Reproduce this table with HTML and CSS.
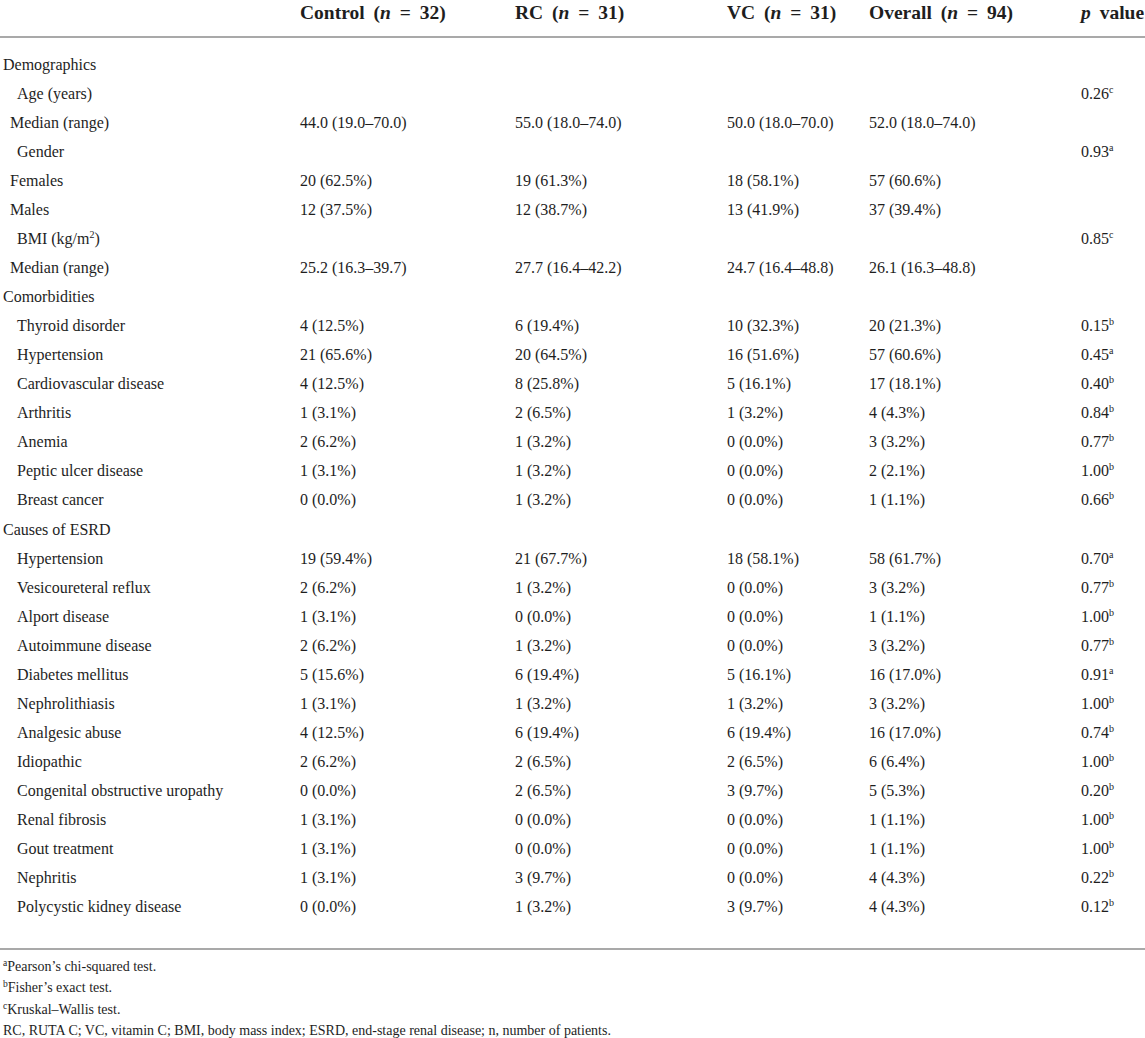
FILE: index.html
```html
<!DOCTYPE html>
<html>
<head>
<meta charset="utf-8">
<link rel="stylesheet" href="styles.css">
</head>
<body>
<div class="tbl">
  <div class="row head">
    <div class="c"></div>
    <div class="c">Control (<i>n</i> = 32)</div>
    <div class="c">RC (<i>n</i> = 31)</div>
    <div class="c">VC (<i>n</i> = 31)</div>
    <div class="c">Overall (<i>n</i> = 94)</div>
    <div class="c"><i>p</i> value</div>
  </div>
  <div class="body">
    <div class="row"><div class="c l0">Demographics</div><div class="c"></div><div class="c"></div><div class="c"></div><div class="c"></div><div class="c"></div></div>
    <div class="row"><div class="c l2">Age (years)</div><div class="c"></div><div class="c"></div><div class="c"></div><div class="c"></div><div class="c">0.26<sup>c</sup></div></div>
    <div class="row"><div class="c l1">Median (range)</div><div class="c">44.0 (19.0–70.0)</div><div class="c">55.0 (18.0–74.0)</div><div class="c">50.0 (18.0–70.0)</div><div class="c">52.0 (18.0–74.0)</div><div class="c"></div></div>
    <div class="row"><div class="c l2">Gender</div><div class="c"></div><div class="c"></div><div class="c"></div><div class="c"></div><div class="c">0.93<sup>a</sup></div></div>
    <div class="row"><div class="c l1">Females</div><div class="c">20 (62.5%)</div><div class="c">19 (61.3%)</div><div class="c">18 (58.1%)</div><div class="c">57 (60.6%)</div><div class="c"></div></div>
    <div class="row"><div class="c l1">Males</div><div class="c">12 (37.5%)</div><div class="c">12 (38.7%)</div><div class="c">13 (41.9%)</div><div class="c">37 (39.4%)</div><div class="c"></div></div>
    <div class="row"><div class="c l2">BMI (kg/m<sup>2</sup>)</div><div class="c"></div><div class="c"></div><div class="c"></div><div class="c"></div><div class="c">0.85<sup>c</sup></div></div>
    <div class="row"><div class="c l1">Median (range)</div><div class="c">25.2 (16.3–39.7)</div><div class="c">27.7 (16.4–42.2)</div><div class="c">24.7 (16.4–48.8)</div><div class="c">26.1 (16.3–48.8)</div><div class="c"></div></div>
    <div class="row"><div class="c l0">Comorbidities</div><div class="c"></div><div class="c"></div><div class="c"></div><div class="c"></div><div class="c"></div></div>
    <div class="row"><div class="c l2">Thyroid disorder</div><div class="c">4 (12.5%)</div><div class="c">6 (19.4%)</div><div class="c">10 (32.3%)</div><div class="c">20 (21.3%)</div><div class="c">0.15<sup>b</sup></div></div>
    <div class="row"><div class="c l2">Hypertension</div><div class="c">21 (65.6%)</div><div class="c">20 (64.5%)</div><div class="c">16 (51.6%)</div><div class="c">57 (60.6%)</div><div class="c">0.45<sup>a</sup></div></div>
    <div class="row"><div class="c l2">Cardiovascular disease</div><div class="c">4 (12.5%)</div><div class="c">8 (25.8%)</div><div class="c">5 (16.1%)</div><div class="c">17 (18.1%)</div><div class="c">0.40<sup>b</sup></div></div>
    <div class="row"><div class="c l2">Arthritis</div><div class="c">1 (3.1%)</div><div class="c">2 (6.5%)</div><div class="c">1 (3.2%)</div><div class="c">4 (4.3%)</div><div class="c">0.84<sup>b</sup></div></div>
    <div class="row"><div class="c l2">Anemia</div><div class="c">2 (6.2%)</div><div class="c">1 (3.2%)</div><div class="c">0 (0.0%)</div><div class="c">3 (3.2%)</div><div class="c">0.77<sup>b</sup></div></div>
    <div class="row"><div class="c l2">Peptic ulcer disease</div><div class="c">1 (3.1%)</div><div class="c">1 (3.2%)</div><div class="c">0 (0.0%)</div><div class="c">2 (2.1%)</div><div class="c">1.00<sup>b</sup></div></div>
    <div class="row"><div class="c l2">Breast cancer</div><div class="c">0 (0.0%)</div><div class="c">1 (3.2%)</div><div class="c">0 (0.0%)</div><div class="c">1 (1.1%)</div><div class="c">0.66<sup>b</sup></div></div>
    <div class="row"><div class="c l0">Causes of ESRD</div><div class="c"></div><div class="c"></div><div class="c"></div><div class="c"></div><div class="c"></div></div>
    <div class="row"><div class="c l2">Hypertension</div><div class="c">19 (59.4%)</div><div class="c">21 (67.7%)</div><div class="c">18 (58.1%)</div><div class="c">58 (61.7%)</div><div class="c">0.70<sup>a</sup></div></div>
    <div class="row"><div class="c l2">Vesicoureteral reflux</div><div class="c">2 (6.2%)</div><div class="c">1 (3.2%)</div><div class="c">0 (0.0%)</div><div class="c">3 (3.2%)</div><div class="c">0.77<sup>b</sup></div></div>
    <div class="row"><div class="c l2">Alport disease</div><div class="c">1 (3.1%)</div><div class="c">0 (0.0%)</div><div class="c">0 (0.0%)</div><div class="c">1 (1.1%)</div><div class="c">1.00<sup>b</sup></div></div>
    <div class="row"><div class="c l2">Autoimmune disease</div><div class="c">2 (6.2%)</div><div class="c">1 (3.2%)</div><div class="c">0 (0.0%)</div><div class="c">3 (3.2%)</div><div class="c">0.77<sup>b</sup></div></div>
    <div class="row"><div class="c l2">Diabetes mellitus</div><div class="c">5 (15.6%)</div><div class="c">6 (19.4%)</div><div class="c">5 (16.1%)</div><div class="c">16 (17.0%)</div><div class="c">0.91<sup>a</sup></div></div>
    <div class="row"><div class="c l2">Nephrolithiasis</div><div class="c">1 (3.1%)</div><div class="c">1 (3.2%)</div><div class="c">1 (3.2%)</div><div class="c">3 (3.2%)</div><div class="c">1.00<sup>b</sup></div></div>
    <div class="row"><div class="c l2">Analgesic abuse</div><div class="c">4 (12.5%)</div><div class="c">6 (19.4%)</div><div class="c">6 (19.4%)</div><div class="c">16 (17.0%)</div><div class="c">0.74<sup>b</sup></div></div>
    <div class="row"><div class="c l2">Idiopathic</div><div class="c">2 (6.2%)</div><div class="c">2 (6.5%)</div><div class="c">2 (6.5%)</div><div class="c">6 (6.4%)</div><div class="c">1.00<sup>b</sup></div></div>
    <div class="row"><div class="c l2">Congenital obstructive uropathy</div><div class="c">0 (0.0%)</div><div class="c">2 (6.5%)</div><div class="c">3 (9.7%)</div><div class="c">5 (5.3%)</div><div class="c">0.20<sup>b</sup></div></div>
    <div class="row"><div class="c l2">Renal fibrosis</div><div class="c">1 (3.1%)</div><div class="c">0 (0.0%)</div><div class="c">0 (0.0%)</div><div class="c">1 (1.1%)</div><div class="c">1.00<sup>b</sup></div></div>
    <div class="row"><div class="c l2">Gout treatment</div><div class="c">1 (3.1%)</div><div class="c">0 (0.0%)</div><div class="c">0 (0.0%)</div><div class="c">1 (1.1%)</div><div class="c">1.00<sup>b</sup></div></div>
    <div class="row"><div class="c l2">Nephritis</div><div class="c">1 (3.1%)</div><div class="c">3 (9.7%)</div><div class="c">0 (0.0%)</div><div class="c">4 (4.3%)</div><div class="c">0.22<sup>b</sup></div></div>
    <div class="row"><div class="c l2">Polycystic kidney disease</div><div class="c">0 (0.0%)</div><div class="c">1 (3.2%)</div><div class="c">3 (9.7%)</div><div class="c">4 (4.3%)</div><div class="c">0.12<sup>b</sup></div></div>
  </div>
  <div class="notes">
    <p><sup>a</sup>Pearson’s chi-squared test.</p>
    <p><sup>b</sup>Fisher’s exact test.</p>
    <p><sup>c</sup>Kruskal–Wallis test.</p>
    <p>RC, RUTA C; VC, vitamin C; BMI, body mass index; ESRD, end-stage renal disease; n, number of patients.</p>
  </div>
</div>
</body>
</html>
```

FILE: styles.css
```css
html, body {
  margin: 0;
  padding: 0;
  background: #ffffff;
  overflow: hidden;
}
body {
  font-family: "Liberation Serif", "Times New Roman", serif;
  color: #1e1e1e;
  font-size: 16px;
}
.tbl {
  width: 1145px;
}
.row {
  display: grid;
  grid-template-columns: 297px 215px 212px 142px 212px 67px;
  height: 29.07px;
  align-items: center;
}
.c {
  padding-left: 3px;
  white-space: nowrap;
  line-height: 20px;
}
.head {
  height: auto;
  align-items: start;
  font-weight: bold;
  font-size: 19.5px;
  word-spacing: 4px;
  padding-top: 1px;
  padding-bottom: 12px;
  border-bottom: 2px solid #a9a9a9;
}
.head .c {
  line-height: 23px;
}
.body {
  padding-top: 12px;
  padding-bottom: 26px;
  border-bottom: 2px solid #a9a9a9;
}
.l0 { padding-left: 3px; }
.l1 { padding-left: 10px; }
.l2 { padding-left: 17px; }
sup {
  font-size: 10px;
  line-height: 0;
  vertical-align: 6px;
}
.notes {
  padding-top: 6px;
  font-size: 14px;
}
.notes p {
  margin: 0;
  padding-left: 3px;
  line-height: 21.5px;
}
.notes sup {
  font-size: 9.5px;
  vertical-align: 5px;
}
```
